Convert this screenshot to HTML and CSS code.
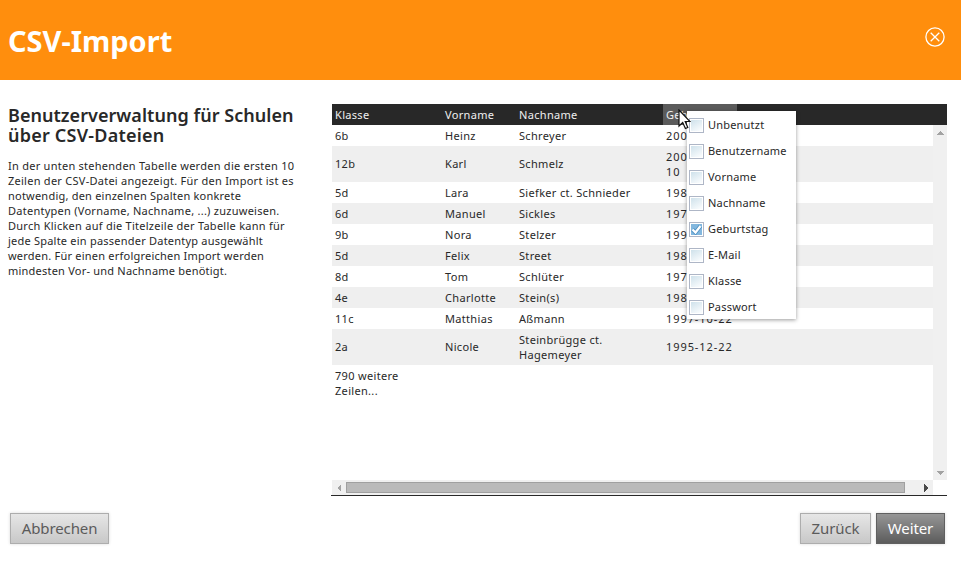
FILE: index.html
```html
<!DOCTYPE html>
<html lang="de">
<head>
<meta charset="utf-8">
<title>CSV-Import</title>
<link rel="stylesheet" href="styles.css">
</head>
<body>
<header class="titlebar">
  <h1>CSV-Import</h1>
  <svg class="close" width="20" height="20" viewBox="0 0 20 20" fill="none" stroke="#fff" stroke-width="1.3"><circle cx="10" cy="10" r="9.1"/><path d="M5.7 5.7l8.6 8.6M14.3 5.7l-8.6 8.6"/></svg>
</header>
<main class="content">
  <section class="intro">
    <h2>Benutzerverwaltung für Schulen<br><span class="wide">über CSV-Dateien</span></h2>
    <p>In der unten stehenden Tabelle werden die ersten 10<br>Zeilen der CSV-Datei angezeigt. Für den Import ist es<br><span class="narrow">notwendig, den einzelnen Spalten konkrete</span><br>Datentypen (Vorname, Nachname, ...) zuzuweisen.<br>Durch Klicken auf die Titelzeile der Tabelle kann für<br><span class="narrow">jede Spalte ein passender Datentyp ausgewählt</span><br><span class="narrow">werden. Für einen erfolgreichen Import werden</span><br><span class="narrow">mindesten Vor- und Nachname benötigt.</span></p>
  </section>
  <section class="grid">
    <div class="row head"><span>Klasse</span><span>Vorname</span><span>Nachname</span><span class="active">Geb</span></div>
    <div class="scroller">
      <div class="rows">
        <div class="row"><span>6b</span><span>Heinz</span><span>Schreyer</span><span class="date">200</span></div>
        <div class="row tall"><span>12b</span><span>Karl</span><span>Schmelz</span><span class="date">200<br>10</span></div>
        <div class="row"><span>5d</span><span>Lara</span><span>Siefker ct. Schnieder</span><span class="date">198</span></div>
        <div class="row"><span>6d</span><span>Manuel</span><span>Sickles</span><span class="date">197</span></div>
        <div class="row"><span>9b</span><span>Nora</span><span>Stelzer</span><span class="date">199</span></div>
        <div class="row"><span>5d</span><span>Felix</span><span>Street</span><span class="date">198</span></div>
        <div class="row"><span>8d</span><span>Tom</span><span>Schlüter</span><span class="date">197</span></div>
        <div class="row"><span>4e</span><span>Charlotte</span><span>Stein(s)</span><span class="date">198</span></div>
        <div class="row"><span>11c</span><span>Matthias</span><span>Aßmann</span><span class="date">1997-10-22</span></div>
        <div class="row tall"><span>2a</span><span>Nicole</span><span>Steinbrügge ct.<br>Hagemeyer</span><span class="date">1995-12-22</span></div>
        <div class="row"><span>790 weitere<br>Zeilen...</span></div>
      </div>
      <div class="vbar">
        <svg width="8" height="4" shape-rendering="crispEdges"><path d="M4 0l4 4H0z" fill="#a3a3a3"/></svg>
        <svg width="8" height="4" shape-rendering="crispEdges"><path d="M0 0h8l-4 4z" fill="#a3a3a3"/></svg>
      </div>
    </div>
    <div class="hbar">
      <svg width="4" height="8" shape-rendering="crispEdges"><path d="M4 0v8l-4-4z" fill="#a3a3a3"/></svg>
      <div class="thumb"></div>
      <svg width="4" height="8" shape-rendering="crispEdges"><path d="M0 0v8l4-4z" fill="#484848"/></svg>
    </div>
    <div class="menu">
      <div class="item"><i class="box"></i><span>Unbenutzt</span></div>
      <div class="item"><i class="box"></i><span>Benutzername</span></div>
      <div class="item"><i class="box"></i><span>Vorname</span></div>
      <div class="item"><i class="box"></i><span>Nachname</span></div>
      <div class="item"><i class="box checked"><svg width="11" height="11" viewBox="0 0 11 11"><path d="M1.5 5.5l3 3L9.5 2" fill="none" stroke="#4e92c4" stroke-width="4"/><path d="M1.5 5.5l3 3L9.5 2" fill="none" stroke="#fff" stroke-width="2.2"/></svg></i><span>Geburtstag</span></div>
      <div class="item"><i class="box"></i><span>E-Mail</span></div>
      <div class="item"><i class="box"></i><span>Klasse</span></div>
      <div class="item"><i class="box"></i><span>Passwort</span></div>
    </div>
    <svg class="cursor" width="13" height="21" viewBox="0 0 13 21"><path d="M1 1v16l3.7-3.5 2.7 6 2.4-1-2.6-6H12z" fill="#fff" stroke="#111" stroke-width="1.2"/></svg>
  </section>
</main>
<footer class="buttons">
  <button class="btn cancel">Abbrechen</button>
  <button class="btn back">Zurück</button>
  <button class="btn next">Weiter</button>
</footer>
</body>
</html>
```

FILE: styles.css
```css
* { box-sizing: border-box; }
body { margin: 0; height: 569px; overflow: hidden; background: #fff; color: #282828; font: 11px/15px "Noto Sans", "DejaVu Sans", sans-serif; letter-spacing: .32px; }
.titlebar { height: 80px; padding: 0 16px 0 8px; background: #ff8e0d; color: #fff; display: flex; justify-content: space-between; }
h1 { margin: 21px 0 0; font-size: 29px; line-height: 40px; font-weight: 700; letter-spacing: 0; }
.close { margin-top: 27px; }
.content { display: flex; height: 416px; padding: 24px 14px 0 8px; }
.intro { width: 323px; white-space: nowrap; }
h2 { margin: 1px 0 0; font-size: 18px; line-height: 20px; font-weight: 600; letter-spacing: .04px; }
h2 .wide { letter-spacing: .22px; }
p { margin: 13px 0 0; letter-spacing: .26px; }
p .narrow { letter-spacing: .22px; }
.grid { position: relative; width: 616px; height: 392px; padding-left: 1px; border-bottom: 1px solid #282828; }
.row { display: grid; grid-template-columns: 110px 74px 147px 74px; align-items: center; white-space: nowrap; }
.row span { padding: 3px; }
.row.tall { height: 36px; padding-bottom: 1px; align-content: start; }
.row.tall span:not(:has(br)) { padding-bottom: 4px; }
.row .date { letter-spacing: .92px; }
.head { height: 21px; background: #282828; color: #f0f0f0; }
.head .active { background: #5b5b5b; }
.scroller { display: flex; height: 355px; }
.rows { flex: 1; }
.rows .row:nth-child(even) { background: #efefef; }
.vbar { width: 14px; background: #f0f0f0; display: flex; flex-direction: column; justify-content: space-between; align-items: center; padding: 6px 0 5px; }
.hbar { width: 601px; height: 15px; background: #f0f0f0; display: flex; align-items: center; padding: 0 5px; }
.hbar svg { flex: none; }
.thumb { flex: none; width: 559px; height: 11px; margin: 0 19px 0 5px; background: #bababa; border: 1px solid #a0a0a0; }
.menu { position: absolute; left: 356px; top: 7px; width: 109px; height: 208px; padding: 1px 2px; background: #fff; box-shadow: 0 1px 4px rgba(0,0,0,.4); letter-spacing: .2px; }
.item { height: 26px; display: flex; align-items: center; gap: 4px; white-space: nowrap; }
.item span { padding-bottom: 2px; }
.box { width: 15px; height: 15px; border: 1px solid #aeb6c6; background: linear-gradient(150deg, #cbdfe9, #f8fbfd 85%); box-shadow: inset 0 0 0 1px #fff; flex: none; }
.box.checked { background: #82b7de; padding: 1px; }
.box svg { display: block; }
.cursor { position: absolute; left: 347px; top: 5px; }
.buttons { display: flex; padding: 17px 16px 0 10px; }
.btn { height: 31px; padding: 0 0 2px; border: 1px solid #adadad; background: linear-gradient(#e6e6e6, #c8c8c8); color: #5b5b5b; font: 15px/20px "Noto Sans", "DejaVu Sans", sans-serif; letter-spacing: -.1px; box-shadow: 0 0 3px rgba(0,0,0,.15); }
.cancel { width: 99px; margin-right: auto; }
.back { width: 71px; margin-right: 5px; }
.next { width: 69px; color: #fff; border-color: #606060; background: linear-gradient(#969696, #5c5c5c); }
```
